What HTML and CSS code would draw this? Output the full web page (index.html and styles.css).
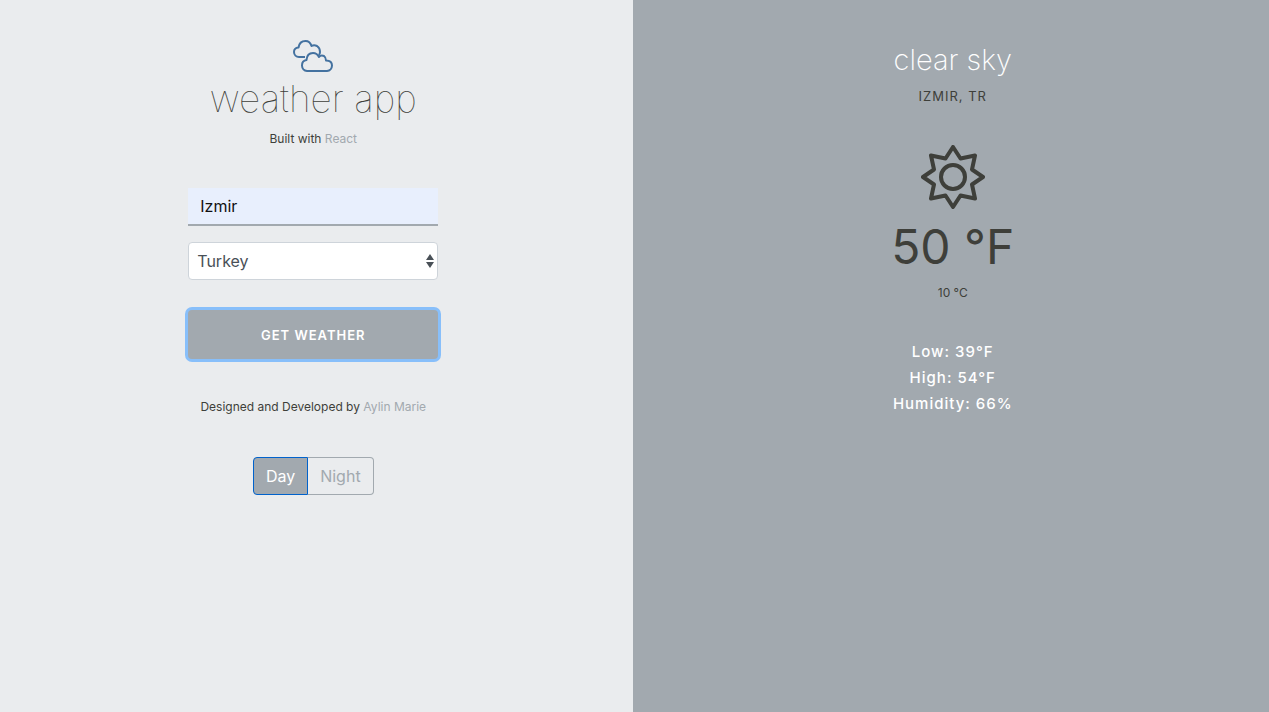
FILE: index.html
```html
<!DOCTYPE html>
<html lang="en">
<head>
<meta charset="utf-8">
<meta name="viewport" content="width=device-width, initial-scale=1">
<title>weather app</title>
<link rel="stylesheet" href="styles.css">
</head>
<body>
<main class="app">
  <section class="panel panel-search">
    <svg class="logo" viewBox="0 0 40 32" aria-hidden="true">
      <path d="M12 17H6A5 5 0 0 1 1 12Q1 8 5.500 7.500Q6.500 1 12.500 1Q17 1 18.500 6Q21 4.500 24 6Q27 8 27 12Q27 13.500 26 15"/>
      <path d="M14 31A5.500 5.500 0 0 1 9 25.500Q9 20.500 13.500 20Q14 13 20 13Q24 13 26 17Q28 14.500 31 16Q33 17.500 33 20.500Q39 20.500 39 25.500A5.500 5.500 0 0 1 34 31Z"/>
    </svg>
    <h1 class="title">weather app</h1>
    <p class="note">Built with <a class="link" href="#react">React</a></p>
    <form class="form">
      <input class="city" type="text" value="Izmir" aria-label="City">
      <div class="country-wrap">
        <select class="country" aria-label="Country"><option>Turkey</option></select>
        <svg class="arrows" viewBox="0 0 8 16" aria-hidden="true"><path d="M4 1L8 7H0ZM0 9H8L4 15Z"/></svg>
      </div>
      <button class="submit" type="button">Get Weather</button>
    </form>
    <p class="note">Designed and Developed by <a class="link" href="#author">Aylin Marie</a></p>
    <div class="toggle" role="group" aria-label="Theme">
      <button class="toggle-item toggle-active" type="button" aria-pressed="true">Day</button>
      <button class="toggle-item" type="button" aria-pressed="false">Night</button>
    </div>
  </section>
  <section class="panel panel-result">
    <h2 class="condition">clear sky</h2>
    <p class="place">Izmir, TR</p>
    <svg class="sun" viewBox="0 0 64 64" aria-hidden="true">
      <path d="M32 2L39.500 13.500L54 10.500L51 24.500L62 32L51 39.500L54 53.500L39.500 50.500L32 62L24.500 50.500L10 53.500L13 39.500L2 32L13 24.500L10 10.500L24.500 13.500Z"/>
      <circle cx="32" cy="32" r="12"/>
    </svg>
    <p class="temperature">50 °F</p>
    <p class="celsius">10 °C</p>
    <ul class="details">
      <li>Low: 39°F</li>
      <li>High: 54°F</li>
      <li>Humidity: 66%</li>
    </ul>
  </section>
</main>
</body>
</html>
```
FILE: styles.css
```css
* { box-sizing: border-box; }

body {
  margin: 0;
  font-family: Inter, "Liberation Sans", sans-serif;
  font-size: 16px;
  line-height: 24px;
  color: #3e3f3a;
}

h1, h2, p, ul { margin: 0; padding: 0; }

.app {
  display: grid;
  grid-template-columns: calc(50% - 2px) 1fr;
  min-height: 100vh;
}

.panel {
  display: flex;
  flex-direction: column;
  align-items: center;
}

.panel-search { padding: 40px 6px 40px 0; background: #eaecee; }
.panel-result { padding: 40px 0 40px 4px; background: #a2a9af; }

.logo {
  width: 40px;
  height: 32px;
  fill: none;
  stroke: #4472a0;
  stroke-width: 2;
  stroke-linejoin: round;
}

.title {
  margin-top: 3px;
  font-size: 37px;
  font-weight: 100;
  line-height: 48px;
}

.note { margin-top: 4px; font-size: 12px; }
.link { color: #a2a9af; text-decoration: none; }

.form {
  display: flex;
  flex-direction: column;
  width: 250px;
  margin: 37px 0 32px;
}

.city {
  width: 100%;
  height: 38px;
  padding: 0 12px;
  border: 0;
  border-bottom: 2px solid #a2a9af;
  background: #e8effd;
  color: #111;
  font: inherit;
}

.country-wrap { position: relative; margin-top: 16px; }

.country {
  display: block;
  width: 100%;
  height: 38px;
  padding: 0 24px 0 8px;
  border: 1px solid #ced4da;
  border-radius: 4px;
  background: #fff;
  color: #495057;
  font: inherit;
  appearance: none;
}

.arrows {
  position: absolute;
  top: 11px;
  right: 4px;
  width: 8px;
  height: 16px;
  fill: #495057;
  pointer-events: none;
}

.submit {
  height: 49px;
  margin-top: 30px;
  border: 0;
  border-radius: 4px;
  background: #a2a9af;
  box-shadow: 0 0 0 3px #88bffa;
  color: #fff;
  font: inherit;
  font-size: 13px;
  font-weight: 600;
  letter-spacing: 1px;
  text-transform: uppercase;
}

.toggle { display: flex; margin-top: 38px; }

.toggle-item {
  height: 38px;
  padding: 0 12px;
  border: 1px solid #a2a9af;
  border-left: 0;
  border-radius: 0 4px 4px 0;
  background: transparent;
  color: #a2a9af;
  font: inherit;
}

.toggle-active {
  border: 1px solid #0062cc;
  border-radius: 4px 0 0 4px;
  background: #a2a9af;
  color: #fff;
}

.condition {
  color: #fff;
  font-size: 29px;
  font-weight: 200;
  line-height: 40px;
}

.place {
  margin-top: 4px;
  font-size: 13px;
  letter-spacing: 1px;
  text-transform: uppercase;
}

.sun {
  width: 64px;
  height: 64px;
  margin-top: 37px;
  fill: none;
  stroke: #3e3f3a;
  stroke-width: 4;
  stroke-linejoin: round;
}

.temperature { margin-top: 8px; font-size: 48px; line-height: 60px; }
.celsius { margin-top: 4px; font-size: 12px; }

.details {
  margin-top: 34px;
  color: #fff;
  font-size: 15px;
  font-weight: 500;
  letter-spacing: 1px;
  line-height: 26px;
  list-style: none;
  text-align: center;
}
```
